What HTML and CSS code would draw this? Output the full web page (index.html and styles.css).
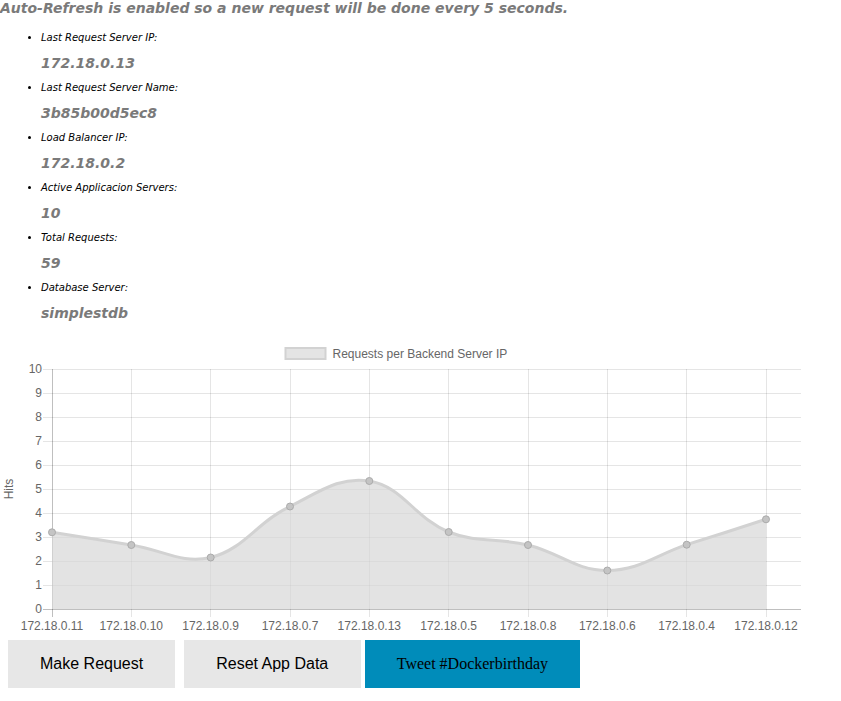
FILE: index.html
```html
<!DOCTYPE html>
<html>
<head>
<meta charset="utf-8">
<link rel="stylesheet" href="styles.css">
</head>
<body>
<h4 class="refresh">Auto-Refresh is enabled so a new request will be done every 5 seconds.</h4>
<ul class="stats">
  <li><span class="label">Last Request Server IP:</span><div class="value">172.18.0.13</div></li>
  <li><span class="label">Last Request Server Name:</span><div class="value">3b85b00d5ec8</div></li>
  <li><span class="label">Load Balancer IP:</span><div class="value">172.18.0.2</div></li>
  <li><span class="label">Active Applicacion Servers:</span><div class="value">10</div></li>
  <li><span class="label">Total Requests:</span><div class="value">59</div></li>
  <li><span class="label">Database Server:</span><div class="value">simplestdb</div></li>
</ul>
<svg class="chart" width="810" height="300" viewBox="0 338 810 300" xmlns="http://www.w3.org/2000/svg">
  <!-- legend -->
  <rect x="285.5" y="348" width="40" height="11" fill="#e4e4e4" stroke="#d2d2d2" stroke-width="2"/>
  <text class="tick" x="332.5" y="357.5">Requests per Backend Server IP</text>
  <!-- horizontal grid -->
  <g stroke="rgba(0,0,0,0.1)" stroke-width="1">
    <line x1="43" y1="369.5" x2="801" y2="369.5"/>
    <line x1="43" y1="393.5" x2="801" y2="393.5"/>
    <line x1="43" y1="417.5" x2="801" y2="417.5"/>
    <line x1="43" y1="441.5" x2="801" y2="441.5"/>
    <line x1="43" y1="465.5" x2="801" y2="465.5"/>
    <line x1="43" y1="489.5" x2="801" y2="489.5"/>
    <line x1="43" y1="513.5" x2="801" y2="513.5"/>
    <line x1="43" y1="537.5" x2="801" y2="537.5"/>
    <line x1="43" y1="561.5" x2="801" y2="561.5"/>
    <line x1="43" y1="585.5" x2="801" y2="585.5"/>
  </g>
  <!-- vertical grid -->
  <g stroke="rgba(0,0,0,0.1)" stroke-width="1">
    <line x1="131.5" y1="369" x2="131.5" y2="617"/>
    <line x1="210.5" y1="369" x2="210.5" y2="617"/>
    <line x1="290.5" y1="369" x2="290.5" y2="617"/>
    <line x1="369.5" y1="369" x2="369.5" y2="617"/>
    <line x1="448.5" y1="369" x2="448.5" y2="617"/>
    <line x1="528.5" y1="369" x2="528.5" y2="617"/>
    <line x1="607.5" y1="369" x2="607.5" y2="617"/>
    <line x1="686.5" y1="369" x2="686.5" y2="617"/>
    <line x1="766.5" y1="369" x2="766.5" y2="617"/>
  </g>
  <!-- axes -->
  <g stroke="rgba(0,0,0,0.25)" stroke-width="1">
    <line x1="52.5" y1="369" x2="52.5" y2="617"/>
    <line x1="43" y1="609.5" x2="801" y2="609.5"/>
  </g>
  <!-- y labels -->
  <g class="tick" text-anchor="end">
    <text x="42" y="373.3">10</text>
    <text x="42" y="397.3">9</text>
    <text x="42" y="421.3">8</text>
    <text x="42" y="445.3">7</text>
    <text x="42" y="469.3">6</text>
    <text x="42" y="493.3">5</text>
    <text x="42" y="517.3">4</text>
    <text x="42" y="541.3">3</text>
    <text x="42" y="565.3">2</text>
    <text x="42" y="589.3">1</text>
    <text x="42" y="613.3">0</text>
  </g>
  <text class="tick" text-anchor="middle" transform="translate(12.5 489) rotate(-90)">Hits</text>
  <!-- x labels -->
  <g class="tick" text-anchor="middle">
    <text x="52" y="630">172.18.0.11</text>
    <text x="131.3" y="630">172.18.0.10</text>
    <text x="210.7" y="630">172.18.0.9</text>
    <text x="290" y="630">172.18.0.7</text>
    <text x="369.3" y="630">172.18.0.13</text>
    <text x="448.7" y="630">172.18.0.5</text>
    <text x="528" y="630">172.18.0.8</text>
    <text x="607.3" y="630">172.18.0.6</text>
    <text x="686.7" y="630">172.18.0.4</text>
    <text x="766" y="630">172.18.0.12</text>
  </g>
  <!-- area -->
  <path fill="rgba(215,215,215,0.7)" d="M52 532.3 C83.6 537.2 99.4 540 131.3 545 C163 550 181.6 564.2 210.7 557.5 C245.2 548.6 256.4 522.2 290 506.5 C319.6 491.7 339.3 476.2 369.3 481 C402.9 486.6 414.5 518.1 448.7 532 C478.1 543.7 497 537.4 528 545 C560.2 553 575.4 570.5 607.3 570.5 C639 570.5 655 555.5 686.7 544.7 C718.6 534.7 734.4 529.4 766 519.3 L766 609 L52 609 Z"/>
  <path fill="none" stroke="#d2d2d2" stroke-width="3" d="M52 532.3 C83.6 537.2 99.4 540 131.3 545 C163 550 181.6 564.2 210.7 557.5 C245.2 548.6 256.4 522.2 290 506.5 C319.6 491.7 339.3 476.2 369.3 481 C402.9 486.6 414.5 518.1 448.7 532 C478.1 543.7 497 537.4 528 545 C560.2 553 575.4 570.5 607.3 570.5 C639 570.5 655 555.5 686.7 544.7 C718.6 534.7 734.4 529.4 766 519.3"/>
  <g fill="#c4c4c4" stroke="#ababab" stroke-width="1">
    <circle cx="52" cy="532.3" r="3.5"/>
    <circle cx="131.3" cy="545" r="3.5"/>
    <circle cx="210.7" cy="557.5" r="3.5"/>
    <circle cx="290" cy="506.5" r="3.5"/>
    <circle cx="369.3" cy="481" r="3.5"/>
    <circle cx="448.7" cy="532" r="3.5"/>
    <circle cx="528" cy="545" r="3.5"/>
    <circle cx="607.3" cy="570.5" r="3.5"/>
    <circle cx="686.7" cy="544.7" r="3.5"/>
    <circle cx="766" cy="519.3" r="3.5"/>
  </g>
</svg>
<div class="actions">
  <button class="btn btn-make">Make Request</button>
  <button class="btn btn-reset">Reset App Data</button>
  <button class="btn btn-tweet">Tweet #Dockerbirthday</button>
</div>
</body>
</html>
```
FILE: styles.css
```css
html, body {
  margin: 0;
  padding: 0;
  background: #fff;
}
body {
  font-family: "DejaVu Sans", sans-serif;
  color: #000;
}
.refresh {
  margin: 0;
  font-size: 14px;
  line-height: 16px;
  font-weight: bold;
  font-style: italic;
  color: #7a7a7a;
}
.stats {
  margin: 15px 0 0;
  padding-left: 41px;
  list-style: disc;
}
.stats li {
  font-size: 10px;
  line-height: 14px;
  font-style: italic;
}
.label {
  display: block;
}
.value {
  margin: 10px 0 9px;
  font-size: 14px;
  line-height: 17px;
  font-weight: bold;
  font-style: italic;
  color: #7a7a7a;
}
.chart {
  display: block;
  margin-top: 16px;
}
.tick {
  font-family: "Liberation Sans", Arial, sans-serif;
  font-size: 12px;
  fill: #666;
}
.actions {
  display: flex;
  margin-top: 2px;
}
.btn {
  flex: none;
  height: 48px;
  padding: 0 32px;
  border: 0;
  margin: 0;
  font-family: "Liberation Sans", Arial, sans-serif;
  font-size: 16px;
  color: #000;
  background: #e7e7e7;
}
.btn-make {
  margin-left: 8px;
}
.btn-reset {
  margin-left: 9px;
  padding-right: 33px;
}
.btn-tweet {
  margin-left: 4px;
  padding: 0 31.5px;
  font-family: "Liberation Serif", "Times New Roman", serif;
  background: #008cba;
}
```
